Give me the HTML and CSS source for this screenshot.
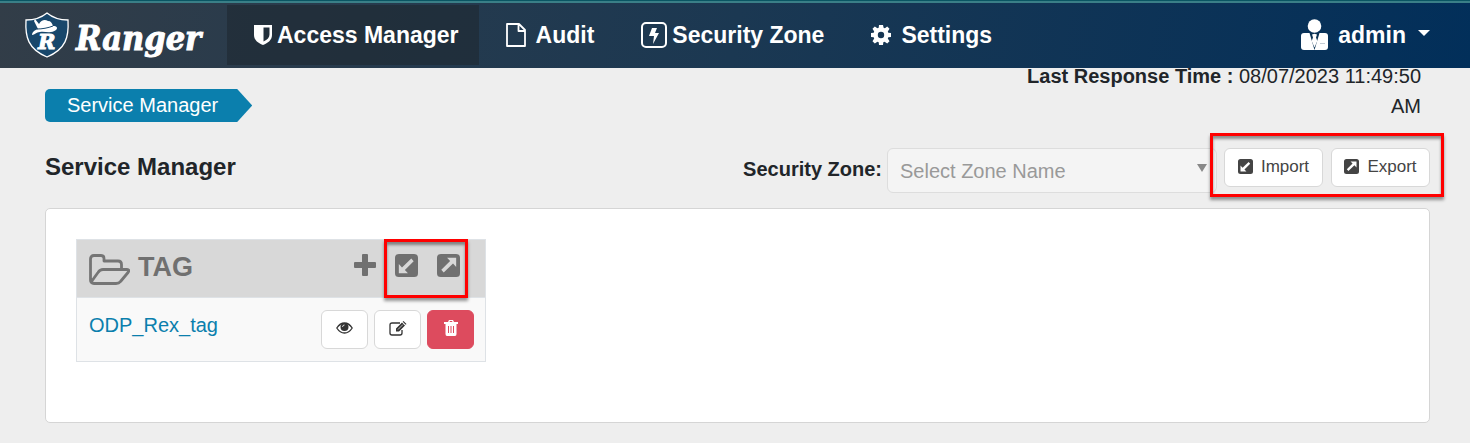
FILE: index.html
```
<!DOCTYPE html>
<html lang="en">
	<head>
		<meta charset="utf-8">
		<title>Ranger</title>
		<meta name="viewport" content="width=device-width, initial-scale=1">
		<link rel="stylesheet" href="styles.css">
	</head>
	<body>
		<!-- icons shared by the toolbar and the service table -->
		<svg class="defs" width="0" height="0">
			<symbol id="i-import" viewBox="0 0 24 24">
				<path fill="currentColor" fill-rule="evenodd" d="M4 0h16a4 4 0 0 1 4 4v16a4 4 0 0 1-4 4H4a4 4 0 0 1-4-4V4a4 4 0 0 1 4-4zM4 10.500v9.500h9.500l-3.200-3.200L19.500 7.500 17 4.800 7.300 14z"/>
			</symbol>
			<symbol id="i-export" viewBox="0 0 24 24">
				<path fill="currentColor" fill-rule="evenodd" d="M4 0h16a4 4 0 0 1 4 4v16a4 4 0 0 1-4 4H4a4 4 0 0 1-4-4V4a4 4 0 0 1 4-4zM20 13.500V4h-9.500l3.200 3.200L4.500 16.500 7 19.200 16.700 10z"/>
			</symbol>
		</svg>

		<header class="topbar">
			<a class="logo" href="#">
				<svg class="shield" viewBox="0 0 46 48">
					<path d="M23 2C17 7 10 9 2 9c-1 17 2 29 21 37C42 38 45 26 44 9 36 9 29 7 23 2z" fill="#18476b" stroke="#fff" stroke-width="1.300"/>
					<text class="shield-letter" x="14" y="38">R</text>
					<path d="M8 24c0-3 3-5 6-6l-4-8 1-2 4 5c2-4 6-5 9-3 3 0 4 2 5 5 4 0 5 2 3 4-5 4-11 1-16 2-4 0-5 3-8 3z" fill="#fff"/>
					<path d="M13 18c5 0 11-1 16-3" fill="none" stroke="#18476b" stroke-width="1"/>
				</svg>
				<span class="brand">Ranger</span>
			</a>
			<nav class="menu">
				<a class="menu-item active" href="#">
					<svg width="18" height="20" viewBox="0 0 18 20"><path fill="#fff" fill-rule="evenodd" d="M0 0h18v10c0 5-4 8-9 10-5-2-9-5-9-10zM9.500 2.500v14c4-2 6-4 6-7v-7z"/></svg>
					<span>Access Manager</span>
				</a>
				<a class="menu-item wide" href="#">
					<svg width="20" height="24" viewBox="0 0 20 24"><path fill="none" stroke="#fff" stroke-width="1.800" stroke-linejoin="round" d="M1 1h12l6 6v16H1zM12.500 1v7H19"/></svg>
					<span>Audit</span>
				</a>
				<a class="menu-item" href="#">
					<svg width="26" height="26" viewBox="0 0 26 26"><rect x="1" y="1" width="24" height="24" rx="4" fill="none" stroke="#fff" stroke-width="2"/><path fill="#fff" d="M11 6h5l-2 5h4l-6 11 1-8H8z"/></svg>
					<span>Security Zone</span>
				</a>
				<a class="menu-item wide" href="#">
					<svg width="20" height="20" viewBox="0 0 20 20"><path fill="#fff" fill-rule="evenodd" d="M8 0h4l.6 2.800 1.300.5L16.200 1.500 18.500 3.800l-1.700 2.700.5 1.300L20 8v4l-2.700.3-.5 1.300 1.700 2.600-2.300 2.300-2.600-1.700-1.300.5L12 20H8l-.3-2.700-1.300-.5-2.600 1.700-2.300-2.300 1.700-2.600-.5-1.300L0 12V8l2.700-.2.5-1.300-1.700-2.700 2.300-2.300 2.600 1.800 1.300-.5zM10 6.800a3.200 3.200 0 1 0 0 6.400 3.200 3.200 0 0 0 0-6.400z"/></svg>
					<span>Settings</span>
				</a>
			</nav>
			<button class="user" type="button">
				<svg width="27" height="32" viewBox="0 0 27 32"><circle cx="13.500" cy="7" r="6.800" fill="#fff"/><path fill="#fff" d="M3 14h21q3 0 3 3v11q0 3-3 3H3q-3 0-3-3V17q0-3 3-3z"/><path d="M8.500 14h10L13.500 31z" fill="#0b3355"/><path fill="#fff" d="M11 15.500l2.500-.8 2.500.8-1 3 1.300 3.500-2.800 6.500-2.800-6.500 1.300-3.500z"/><path d="M19 24.500h5" stroke="#c3ccd4"/></svg>
				<span>admin</span>
				<svg class="caret" width="12" height="6" viewBox="0 0 12 6"><path fill="#fff" d="M0 0h12L6 6z"/></svg>
			</button>
		</header>

		<main class="content">
			<div class="crumb-row">
				<a class="crumb" href="#">Service Manager</a>
				<p class="response"><b>Last Response Time :</b> 08/07/2023 11:49:50 AM</p>
			</div>

			<div class="title-row">
				<h1>Service Manager</h1>
				<label class="zone-label" for="zone">Security Zone:</label>
				<div class="zone">
					<select id="zone" disabled>
						<option>Select Zone Name</option>
					</select>
					<svg width="10" height="8" viewBox="0 0 10 8"><path fill="#888" d="M0 0h10L5 8z"/></svg>
				</div>
				<div class="transfer">
					<button class="btn" type="button"><svg width="15" height="15"><use href="#i-import"/></svg>Import</button>
					<button class="btn" type="button"><svg width="15" height="15"><use href="#i-export"/></svg>Export</button>
					<span class="mark mark-transfer"></span>
				</div>
			</div>

			<section class="panel">
				<table class="service">
					<thead>
						<tr>
							<th>
								<div class="service-head">
									<svg width="41" height="31" viewBox="0 0 41 31"><path fill="none" stroke="#757575" stroke-width="2.800" stroke-linejoin="round" d="M5 29.500Q1.500 29.500 1.500 26V5Q1.500 1.500 5 1.500h7q3 0 3 3V7h14q3.500 0 3.500 3.500V15M4 29.500h23q3 0 4.500-2l7.500-9q2-3-1-3H14q-3 0-5 3l-6.500 9"/></svg>
									<span class="service-name">TAG</span>
									<button class="icon-btn" type="button" aria-label="Add"><svg width="22" height="22" viewBox="0 0 22 22"><path fill="currentColor" d="M9 0h4q1 0 1 1v7h7q1 0 1 1v4q0 1-1 1h-7v7q0 1-1 1H9q-1 0-1-1v-7H1q-1 0-1-1V9q0-1 1-1h7V1q0-1 1-1z"/></svg></button>
									<div class="service-transfer">
										<button class="icon-btn" type="button" aria-label="Import"><svg width="23" height="23"><use href="#i-import"/></svg></button>
										<button class="icon-btn" type="button" aria-label="Export"><svg width="23" height="23"><use href="#i-export"/></svg></button>
										<span class="mark mark-service"></span>
									</div>
								</div>
							</th>
						</tr>
					</thead>
					<tbody>
						<tr>
							<td>
								<div class="service-row">
									<a href="#">ODP_Rex_tag</a>
									<button class="act" type="button" aria-label="View"><svg width="17" height="12" viewBox="0 0 17 12"><path fill="none" stroke="currentColor" stroke-width="1.300" d="M.8 6Q4 1 8.500 1t7.700 5Q13 11 8.500 11T.8 6z"/><circle cx="8.500" cy="5" r="4" fill="currentColor"/><path d="M6.500 5q0-2 2-2" fill="none" stroke="#fff" stroke-width=".8"/></svg></button>
									<button class="act" type="button" aria-label="Edit"><svg width="18" height="15" viewBox="0 0 18 15"><path fill="none" stroke="currentColor" stroke-width="1.300" d="M11 2H3Q1 2 1 4v8q0 2 2 2h8q2 0 2-2V9"/><path fill="currentColor" d="M7 7.500L13 1.500l3 3-6 6H7zM13.700.8l.8-.8 3 3-.8.8z"/><path d="M9 8.500l5-5" stroke="#fff" stroke-width=".7"/></svg></button>
									<button class="act danger" type="button" aria-label="Delete"><svg width="14" height="16" viewBox="0 0 14 16"><path fill="#fff" fill-rule="evenodd" d="M4 2l1-2h4l1 2h4v2h-1.500v10q0 2-1.500 2H3q-1.500 0-1.500-2V4H0V2zM5.500 2h3L8 1H6zM4 6v7h1V6zM6.500 6v7h1V6zM9 6v7h1V6z"/></svg></button>
								</div>
							</td>
						</tr>
					</tbody>
				</table>
			</section>
		</main>
	</body>
</html>
```
FILE: styles.css
```
* {
	box-sizing: border-box;
}
body {
	margin: 0;
	background: #eee;
	color: #212529;
	font-family: "Liberation Sans", Arial, sans-serif;
	font-size: 20px;
	line-height: 30px;
}
a {
	color: #0b7fad;
	text-decoration: none;
}
button {
	font-family: inherit;
	cursor: pointer;
}
svg {
	display: block;
	flex: none;
}
.defs {
	position: absolute;
}

/* top bar */
.topbar {
	position: fixed;
	top: 0;
	left: 0;
	right: 0;
	z-index: 1;
	display: flex;
	height: 68px;
	padding: 4px 40px 3px 24px;
	border-top: 1px solid #0a5563;
	background: linear-gradient(#3a7f87 2px, transparent 2px), linear-gradient(100deg, #323d48, #1b3852 50%, #022f5a);
}
.logo {
	display: flex;
	align-items: center;
	width: 203px;
}
.shield {
	width: 46px;
	height: 48px;
}
.shield-letter {
	font: italic bold 21px "DejaVu Serif", serif;
	fill: #fff;
	stroke: #fff;
	stroke-width: 1px;
}
.brand {
	padding: 5px 0 0 6px;
	color: #fff;
	font: italic bold 34px "DejaVu Serif Condensed", "DejaVu Serif", serif;
	-webkit-text-stroke: 1px #fff;
}
.menu {
	display: flex;
	margin-right: auto;
}
.menu-item, .user {
	display: flex;
	align-items: center;
	gap: 5px;
	color: #fff;
	font-size: 23px;
	font-weight: bold;
}
.menu-item {
	padding: 0 20px 0 27px;
}
.wide, .user {
	gap: 10px;
}
.active {
	background: rgba(30, 40, 48, 0.6);
}
.user {
	padding: 0;
	border: 0;
	background: none;
}
.caret {
	margin: 0 0 4px 2px;
}

/* page */
.content {
	padding: 61px 40px 20px 45px;
}
.crumb-row {
	display: flex;
	justify-content: space-between;
}
.crumb {
	height: 33px;
	margin-top: 28px;
	padding: 1px 34px 0 22px;
	border-radius: 5px 0 0 5px;
	background: #0b7fad;
	color: #fff;
	clip-path: polygon(0 0, calc(100% - 15px) 0, 100% 50%, calc(100% - 15px) 100%, 0 100%);
}
.response {
	width: 410px;
	margin: 0;
	padding-right: 9px;
	text-align: right;
}
.title-row {
	display: flex;
	align-items: flex-start;
	margin-top: 26px;
}
h1 {
	margin: 4px auto 0 0;
	font-size: 24px;
	line-height: 30px;
}
.zone-label {
	margin: 6px 5px 0 0;
	font-weight: bold;
}
.zone {
	display: grid;
	width: 330px;
	margin-right: 7px;
}
.zone select, .zone svg {
	grid-area: 1 / 1;
}
.zone select {
	height: 45px;
	padding: 0 12px;
	border: 1px solid #ddd;
	border-radius: 6px;
	background: #f4f4f4;
	color: #999;
	font-family: inherit;
	font-size: 20px;
	opacity: 1;
	appearance: none;
}
.zone svg {
	place-self: center end;
	margin: 0 10px 5px 0;
}
.transfer {
	position: relative;
	display: flex;
	gap: 8px;
}
.btn {
	display: flex;
	align-items: center;
	justify-content: center;
	gap: 8px;
	width: 99px;
	height: 39px;
	padding: 0 0 2px;
	border: 1px solid #d8d8d8;
	border-radius: 6px;
	background: #fff;
	color: #444;
	font-size: 17px;
}

/* red call-out frames */
.mark {
	position: absolute;
	border: 3px solid #f00;
	box-shadow: 0 3px 3px rgba(0, 0, 0, 0.4), inset 0 3px 3px rgba(0, 0, 0, 0.4);
	pointer-events: none;
}
.mark-transfer {
	inset: -15px -14px -10px;
}
.mark-service {
	inset: -15px -8px -21px -11px;
}

/* service list */
.panel {
	margin-top: 15px;
	padding: 30px 30px 60px;
	border: 1px solid #d5d5d5;
	border-radius: 5px;
	background: #fff;
}
.service {
	width: 31%;
	border: 1px solid #dee2e6;
	border-collapse: separate;
	border-spacing: 0;
}
.service th, .service td {
	padding: 0;
}
.service th {
	background: #d8d8d8;
	color: #707070;
}
.service td {
	border-top: 1px solid #dee2e6;
	background: #f9f9f9;
}
.service-head {
	display: flex;
	align-items: flex-start;
	height: 57px;
	padding: 14px 25px 0 12px;
}
.service-name {
	margin: -2px auto 0 8px;
	font-size: 27px;
}
.icon-btn {
	padding: 0;
	border: 0;
	background: none;
	color: #707070;
}
.service-transfer {
	position: relative;
	display: flex;
	gap: 19px;
	margin-left: 19px;
}
.service-row {
	display: flex;
	gap: 6px;
	padding: 12px 11px 12px 12px;
}
.service-row a {
	margin-right: auto;
}
.act {
	display: flex;
	align-items: center;
	justify-content: center;
	width: 47px;
	height: 39px;
	padding: 0 0 3px;
	border: 1px solid #d8d8d8;
	border-radius: 6px;
	background: #fff;
	color: #333;
}
.danger {
	border-color: #dd4b5e;
	background: #dd4b5e;
}
```
